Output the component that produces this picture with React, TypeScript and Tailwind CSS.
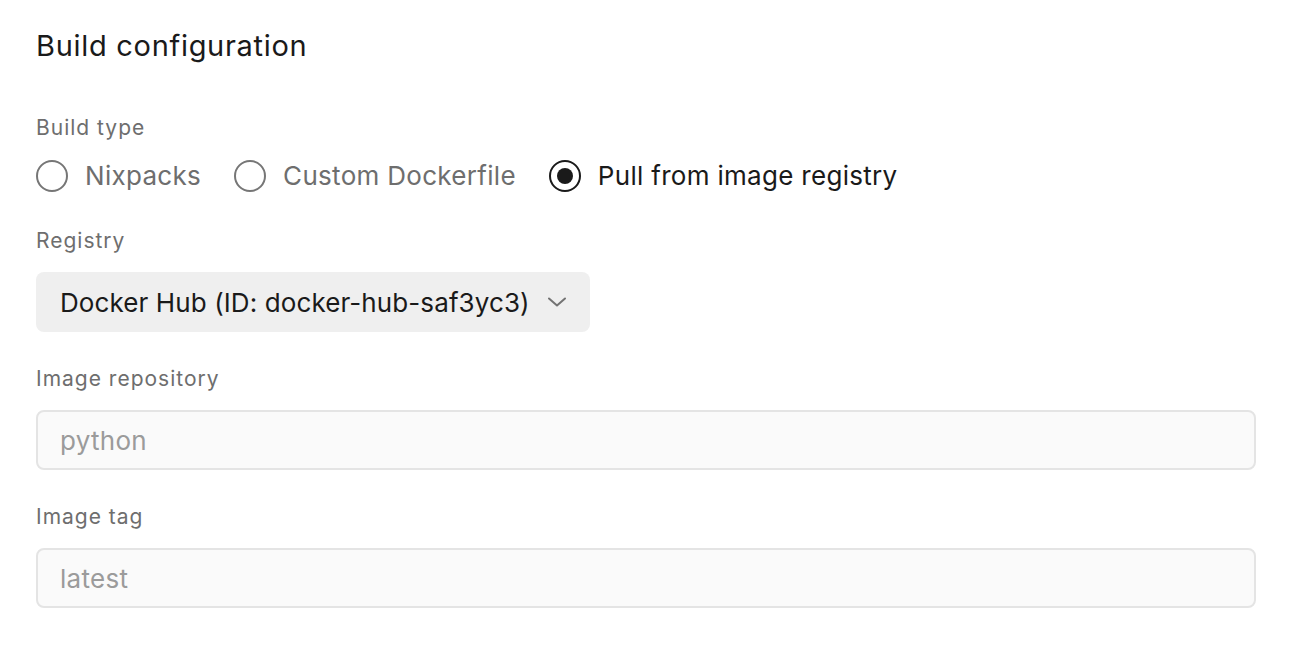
const OPTIONS = [
    { label: "Nixpacks", checked: false },
    { label: "Custom Dockerfile", checked: false },
    { label: "Pull from image registry", checked: true },
];

function Radio({ label, checked }: { label: string; checked: boolean }) {
    return (
        <label className="flex items-center gap-[17px]">
            <span
                className={
                    checked
                        ? "w-8 h-8 rounded-full border-2 border-[#1a1a1a] flex items-center justify-center"
                        : "w-8 h-8 rounded-full border-2 border-[#767676]"
                }
            >
                {checked && <span className="w-4 h-4 rounded-full bg-[#1a1a1a]" />}
            </span>
            <span className={checked ? "text-[#1a1a1a]" : "text-[#6e6e6e]"}>{label}</span>
        </label>
    );
}

function Label({ children, className }: { children: string; className: string }) {
    return (
        <div className={"text-[21px] leading-7 tracking-[1px] text-[#6e6e6e] " + className}>{children}</div>
    );
}

export default function App() {
    return (
        <div
            className="min-h-screen bg-white px-9 pt-[26px] text-[#1a1a1a]"
            style={{ fontFamily: "Inter, 'Liberation Sans', sans-serif" }}
        >
            <h2 className="text-[29px] leading-10 tracking-[0.7px]">Build configuration</h2>

            <Label className="mt-[48px]">Build type</Label>
            <div className="mt-[14px] flex items-center gap-[33px] text-[26px] leading-10 tracking-[0.3px]">
                {OPTIONS.map((o) => (
                    <Radio key={o.label} label={o.label} checked={o.checked} />
                ))}
            </div>

            <Label className="mt-[31px]">Registry</Label>
            <div className="mt-[17px] inline-flex h-[60px] items-center gap-[18px] rounded-lg bg-[#efefef] px-6 text-[26px] tracking-[0.1px]">
                <span>Docker Hub (ID: docker-hub-saf3yc3)</span>
                <svg width="18" height="10" viewBox="0 0 18 10" fill="none" className="text-[#737373]">
                    <path d="M1 1.5 9 8.5 17 1.5" stroke="currentColor" strokeWidth="2" strokeLinecap="round" strokeLinejoin="round" />
                </svg>
            </div>

            <Label className="mt-[33px]">Image repository</Label>
            <div className="mt-[17px] flex h-[60px] items-center rounded-lg border-2 border-[#e4e4e4] bg-[#fafafa] px-[22px] text-[26px] tracking-[0.3px] text-[#9b9b9b]">
                python
            </div>

            <Label className="mt-[33px]">Image tag</Label>
            <div className="mt-[17px] flex h-[60px] items-center rounded-lg border-2 border-[#e4e4e4] bg-[#fafafa] px-[22px] text-[26px] tracking-[0.3px] text-[#9b9b9b]">
                latest
            </div>
        </div>
    );
}
